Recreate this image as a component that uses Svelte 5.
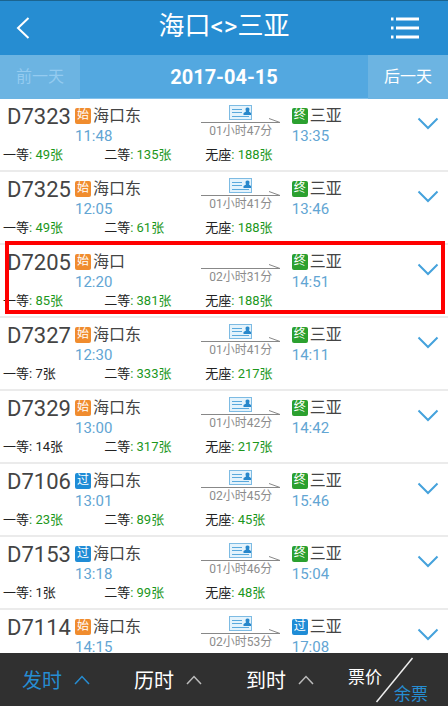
<script>
    const trains = [
        { no: 'D7323', from: '海口东', start: '11:48', fromTag: '始', to: '三亚', arrive: '13:35', toTag: '终', duration: '01小时47分', card: true, seats: [49, 135, 188] },
        { no: 'D7325', from: '海口东', start: '12:05', fromTag: '始', to: '三亚', arrive: '13:46', toTag: '终', duration: '01小时41分', card: true, seats: [49, 61, 188] },
        { no: 'D7205', from: '海口', start: '12:20', fromTag: '始', to: '三亚', arrive: '14:51', toTag: '终', duration: '02小时31分', card: false, seats: [85, 381, 188], marked: true },
        { no: 'D7327', from: '海口东', start: '12:30', fromTag: '始', to: '三亚', arrive: '14:11', toTag: '终', duration: '01小时41分', card: true, seats: [7, 333, 217] },
        { no: 'D7329', from: '海口东', start: '13:00', fromTag: '始', to: '三亚', arrive: '14:42', toTag: '终', duration: '01小时42分', card: true, seats: [14, 317, 217] },
        { no: 'D7106', from: '海口东', start: '13:01', fromTag: '过', to: '三亚', arrive: '15:46', toTag: '终', duration: '02小时45分', card: true, seats: [23, 89, 45] },
        { no: 'D7153', from: '海口东', start: '13:18', fromTag: '过', to: '三亚', arrive: '15:04', toTag: '终', duration: '01小时46分', card: true, seats: [1, 99, 48] },
        { no: 'D7114', from: '海口东', start: '14:15', fromTag: '始', to: '三亚', arrive: '17:08', toTag: '过', duration: '02小时53分', card: true, seats: [] }
    ];

    const seatNames = ['一等', '二等', '无座'];
    const tagClass = { 始: 'first', 终: 'last', 过: 'pass' };
    const sorts = ['发时', '历时', '到时'];

    let sort = $state('发时');
</script>

<div class="page">
    <header>
        <button class="back" aria-label="返回">
            <svg width="14" height="22" viewBox="0 0 14 22"><path d="M12.5 1 2 11l10.5 10" /></svg>
        </button>
        <h1>海口&lt;&gt;三亚</h1>
        <button class="menu" aria-label="菜单">
            <svg width="30" height="24" viewBox="0 0 30 24">
                <path d="M1 3h2.5M1 12h2.5M1 21h2.5M6 3h23M6 12h23M6 21h23" />
            </svg>
        </button>
    </header>

    <nav class="days">
        <button disabled>前一天</button>
        <strong>2017-04-15</strong>
        <button>后一天</button>
    </nav>

    <ul class="trains">
        {#each trains as train}
            <li class:marked={train.marked}>
                <div class="trip">
                    <span class="no">{train.no}</span>
                    <div class="stop">
                        <div class="station"><i class={tagClass[train.fromTag]}>{train.fromTag}</i>{train.from}</div>
                        <time>{train.start}</time>
                    </div>
                    <div class="duration">
                        <svg width="80" height="20" viewBox="0 0 80 20">
                            {#if train.card}
                                <rect x="28.5" y=".5" width="22" height="14" fill="#e4f3fc" stroke="#7dbbe3" />
                                <path d="M31 4.5h10M31 7.5h10M31 11.5h17" stroke="#5aa9dc" fill="none" />
                                <path d="M42.500 10V8l2.500-1.500q-1.500-4 1.500-4t1.500 4L50 8v2z" fill="#2787cb" />
                            {/if}
                            <path d="M0 17.500h79L68 13.500" stroke="#888" fill="none" />
                        </svg>
                        <span>{train.duration}</span>
                    </div>
                    <div class="stop end">
                        <div class="station"><i class={tagClass[train.toTag]}>{train.toTag}</i>{train.to}</div>
                        <time>{train.arrive}</time>
                    </div>
                    <button class="more" aria-label="展开 {train.no}">
                        <svg width="22" height="13" viewBox="0 0 22 13"><path d="M1.500 1.500 11 11l9.500-9.500" /></svg>
                    </button>
                </div>
                <div class="seats">
                    {#each train.seats as count, i}
                        <span class:few={count < 20}>{seatNames[i]}<b>: {count}张</b></span>
                    {/each}
                </div>
            </li>
        {/each}
    </ul>

    <footer>
        {#each sorts as name}
            <button class="sort" class:active={sort === name} onclick={() => (sort = name)}>
                {name}
                <svg width="16" height="10" viewBox="0 0 16 10"><path d="M1 9l7-7.500L15 9" /></svg>
            </button>
        {/each}
        <button class="price">
            <span>票价</span>
            <svg width="40" height="46" viewBox="0 0 40 46"><path d="M1.500 45 37.500 1" /></svg>
            <span class="left">余票</span>
        </button>
    </footer>
</div>

<style>
    :global(body) {
        margin: 0;
        background: #fff;
    }

    .page {
        display: flex;
        flex-direction: column;
        height: 100vh;
        overflow: hidden;
        font-family: Roboto, "Noto Sans CJK SC", sans-serif;
        color: #444;
    }

    button {
        margin: 0;
        padding: 0;
        border: 0;
        background: none;
        font: inherit;
        color: inherit;
        cursor: pointer;
    }

    svg {
        display: block;
        flex: none;
    }

    header {
        display: grid;
        grid-template-columns: 60px 1fr 60px;
        align-items: center;
        height: 55px;
        flex: none;
        box-sizing: border-box;
        border-top: 1px solid #1b648f;
        background: #268dd2;
        color: #fff;
    }

    header path {
        fill: none;
        stroke: #fff;
        stroke-width: 2;
    }

    .menu path {
        stroke-width: 3;
    }

    h1 {
        margin: 0;
        padding-bottom: 4px;
        font-size: 26px;
        line-height: 32px;
        font-weight: 400;
        text-align: center;
    }

    .back {
        padding-left: 16px;
    }

    .menu {
        padding-left: 2px;
    }

    .days {
        display: grid;
        grid-template-columns: 80px 1fr 80px;
        align-items: stretch;
        height: 44px;
        flex: none;
        box-sizing: border-box;
        border-bottom: 1px solid #83c2ec;
        background: #53a8e0;
        color: #fff;
        text-align: center;
    }

    .days button {
        padding-bottom: 4px;
        background: #6cb4e2;
        font-size: 16px;
    }

    .days button:disabled {
        color: #94cbf0;
    }

    .days strong {
        font-size: 20px;
        line-height: 44px;
    }

    .trains {
        flex: 1;
        min-height: 0;
        overflow: hidden;
        margin: 0;
        padding: 0;
        list-style: none;
    }

    li {
        position: relative;
        height: 73px;
        box-sizing: border-box;
        border-bottom: 2px solid #ebebeb;
    }

    /* red frame drawn over the row */
    .marked::after {
        content: "";
        position: absolute;
        z-index: 1;
        top: -4px;
        right: 3px;
        bottom: 2px;
        left: 5px;
        border: 4px solid #f00;
        pointer-events: none;
    }

    .trip {
        display: grid;
        grid-template-columns: 68px 12fr 80px 13fr 22px;
        height: 46px;
        padding: 0 9px 0 7px;
    }

    .no {
        font-size: 22px;
        line-height: 36px;
    }

    .stop {
        padding-top: 7px;
    }

    .end {
        padding-left: 11px;
    }

    .station {
        display: flex;
        align-items: center;
        gap: 2px;
        font-size: 16px;
        line-height: 20px;
    }

    i {
        width: 16px;
        height: 16px;
        border-radius: 2px;
        color: #fff;
        font-size: 12px;
        line-height: 15px;
        font-style: normal;
        text-align: center;
    }

    .first {
        background: #f08c2e;
    }

    .last {
        background: #2ba02f;
    }

    .pass {
        background: #1f8cd6;
    }

    time {
        display: block;
        font-size: 15px;
        line-height: 20px;
        color: #62a5d3;
    }

    .duration {
        padding-top: 6px;
        font-size: 12px;
        line-height: 12px;
        color: #8c8c8c;
        text-align: center;
    }

    .more {
        padding-top: 2px;
    }

    .more path {
        fill: none;
        stroke: #45a2dc;
        stroke-width: 2;
    }

    .seats {
        display: grid;
        grid-template-columns: 5fr 5fr 12fr;
        padding-left: 3px;
        font-size: 13px;
        line-height: 20px;
        color: #222;
    }

    b {
        font-weight: 400;
        color: #1c971c;
    }

    .few b {
        color: #222;
    }

    footer {
        display: grid;
        grid-template-columns: repeat(4, 1fr);
        height: 53px;
        flex: none;
        background: #303030;
        color: #fff;
    }

    footer path {
        fill: none;
        stroke: #bbb;
        stroke-width: 1.5;
    }

    .sort {
        display: flex;
        align-items: center;
        gap: 12px;
        padding-left: 22px;
        font-size: 20px;
    }

    .active {
        color: #268dd2;
    }

    .active path {
        stroke: #268dd2;
    }

    .price {
        display: flex;
        padding-left: 12px;
        font-size: 17px;
        line-height: 24px;
    }

    .price span {
        align-self: flex-start;
        padding-top: 12px;
    }

    .price svg {
        align-self: center;
        margin: 0 -21px 0 -7px;
    }

    .price path {
        stroke: #eee;
    }

    .price .left {
        align-self: flex-end;
        color: #268dd2;
    }
</style>
